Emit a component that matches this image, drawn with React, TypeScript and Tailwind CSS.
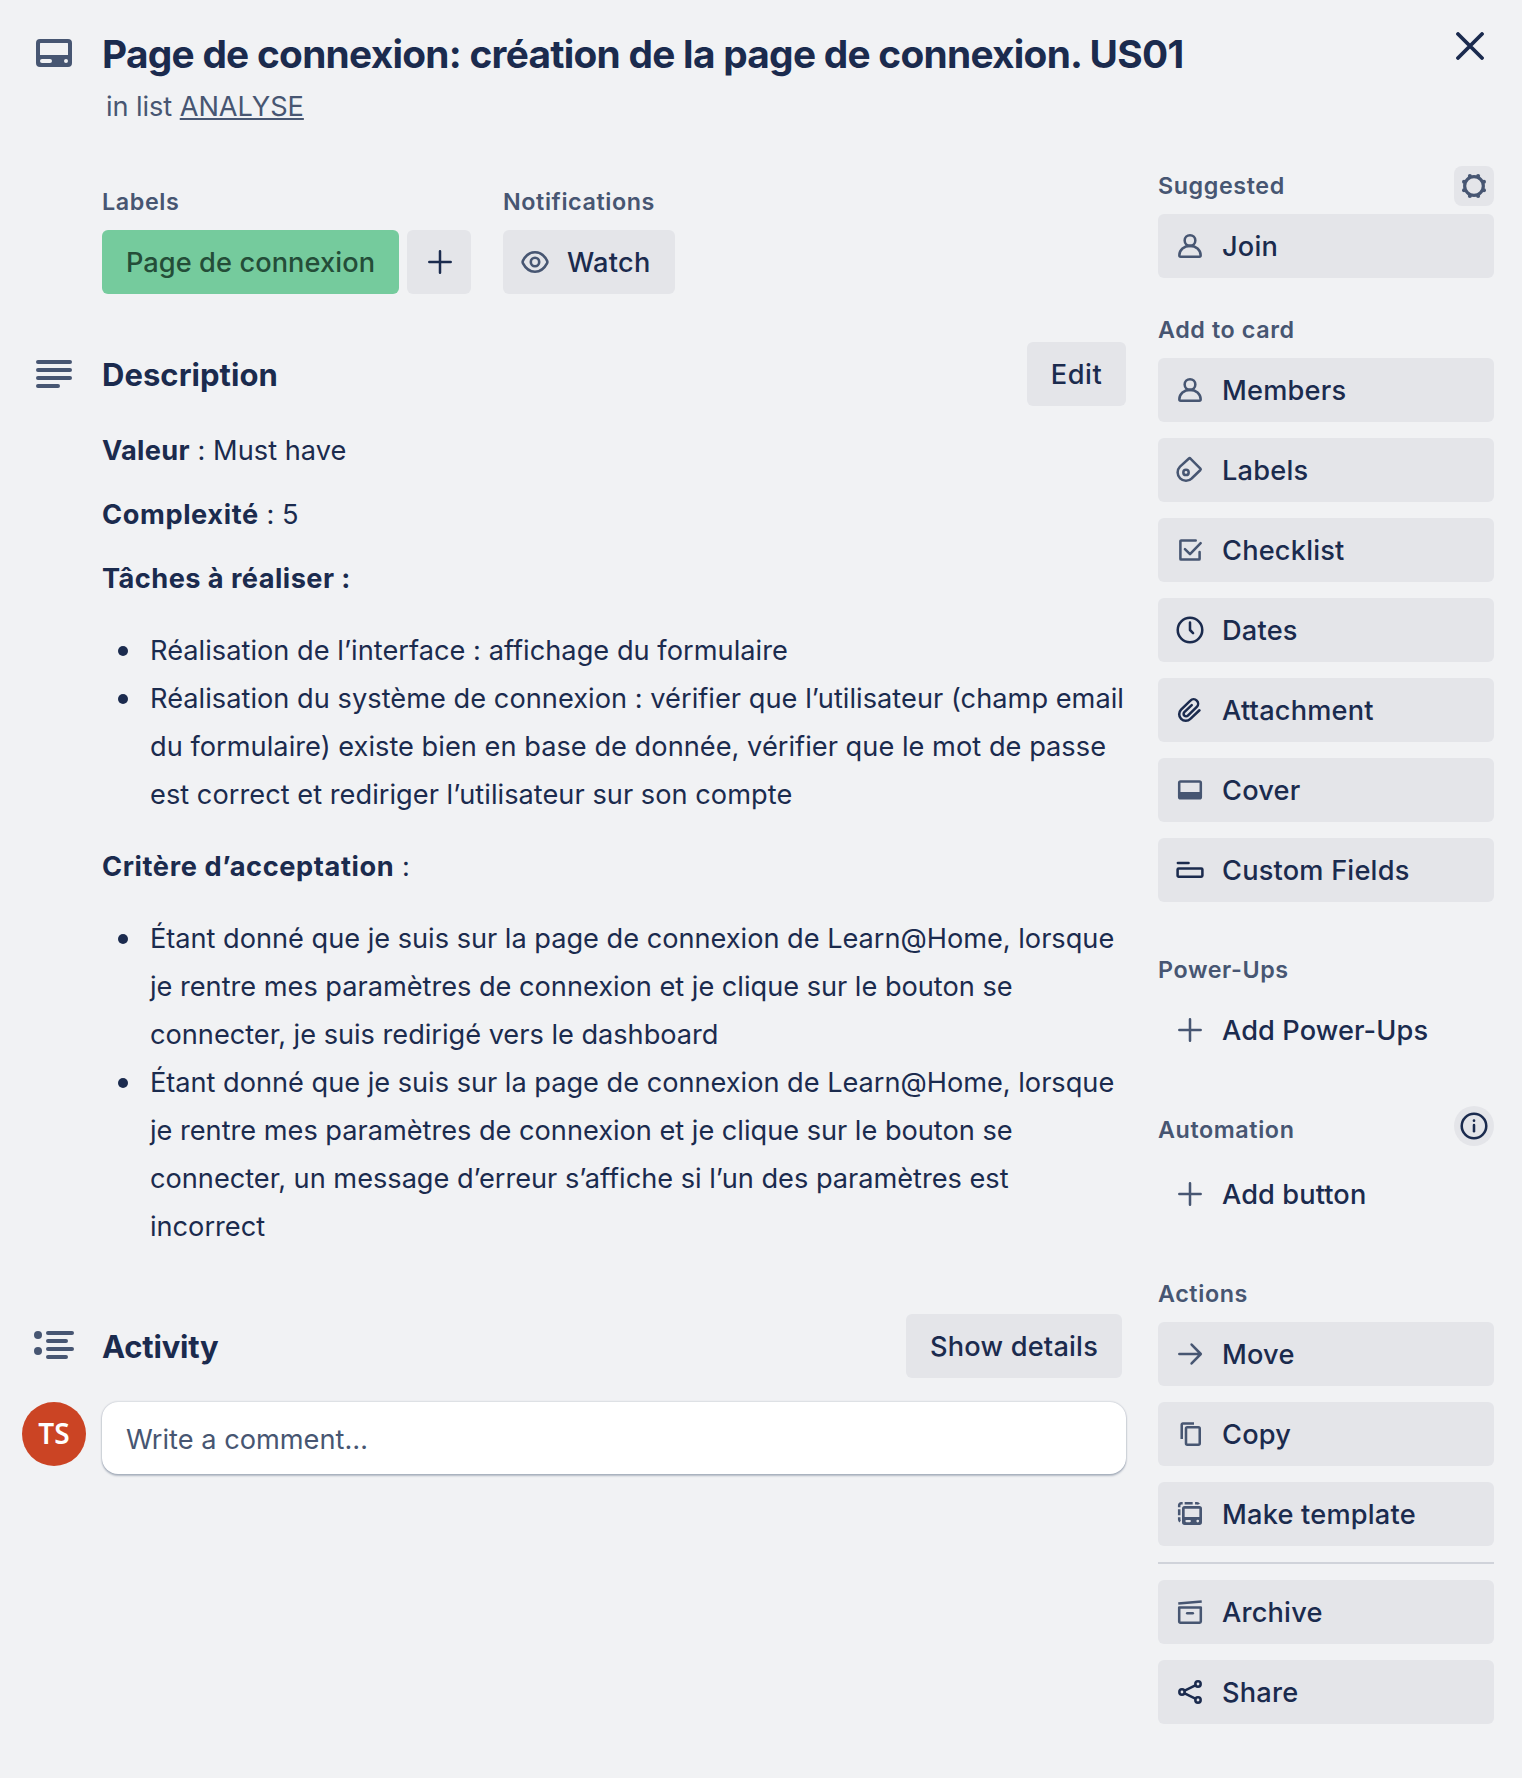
import React from "react";
import type { ReactNode } from "react";

function Icon({ children, dark = false }: { children: ReactNode; dark?: boolean }) {
  return (
    <svg
      viewBox="0 0 24 24"
      fill="none"
      stroke="currentColor"
      strokeWidth="1.9"
      strokeLinecap="round"
      strokeLinejoin="round"
      className={dark ? "size-8 shrink-0 text-[#1b2b4e]" : "size-8 shrink-0 text-[#475672]"}
    >
      {children}
    </svg>
  );
}

const MemberIcon = () => (
  <Icon>
    <circle cx="12" cy="7.9" r="4" />
    <path d="M5 20h14a1 1 0 0 0 1-1c0-4.200-3.600-7.100-8-7.100s-8 2.900-8 7.100a1 1 0 0 0 1 1z" />
  </Icon>
);

const TagIcon = () => (
  <Icon>
    <path d="M4.500 9.500 11.200 3.400a.8.8 0 0 1 1.100 0l7.500 7.500a.8.8 0 0 1 0 1.100l-6.400 6.200A6.200 6.200 0 0 1 4.500 9.500z" />
    <circle cx="9" cy="13.800" r="2" />
  </Icon>
);

const ChecklistIcon = () => (
  <Icon>
    <path d="M16.300 4.800H5.300a.5.5 0 0 0-.5.5v13.400a.5.5 0 0 0 .5.5h13.400a.5.5 0 0 0 .5-.5v-5.200" />
    <path d="M8.200 11.300 12 15.100 20 6.800" />
  </Icon>
);

const ClockIcon = () => (
  <Icon dark>
    <circle cx="12" cy="12" r="9.200" />
    <path d="M12 6.300V12l2.300 2.400" />
  </Icon>
);

const ClipIcon = () => (
  <Icon dark>
    <path d="M19.100 12.200 12.300 18.700a4.950 4.950 0 0 1-7-7L12.300 4.950a3.350 3.350 0 0 1 4.800 4.750l-6.700 6.500a1.850 1.850 0 0 1-2.650-2.600L13.300 8.400" />
  </Icon>
);

const CoverIcon = () => (
  <Icon>
    <rect x="3.900" y="5.700" width="16.200" height="12.500" rx="1" />
    <path d="M3.900 13.500h16.200v4.200a.5.5 0 0 1-.5.5H4.400a.5.5 0 0 1-.5-.5z" fill="currentColor" stroke="none" />
  </Icon>
);

const FieldsIcon = () => (
  <Icon dark>
    <path d="M2.900 6.800h8" />
    <rect x="2.700" y="10.800" width="18.600" height="6.200" rx="0.800" />
  </Icon>
);

const PlusIcon = () => (
  <Icon>
    <path d="M12 4v16M4 12h16" />
  </Icon>
);

const ArrowIcon = () => (
  <Icon>
    <path d="M4 12h16M13.200 4.900 20.100 12l-6.900 7.100" />
  </Icon>
);

const CopyIcon = () => (
  <Icon>
    <path d="M5.800 15.700V4.900a.8.8 0 0 1 .8-.8H15" strokeLinecap="butt" />
    <rect x="9" y="7" width="10.300" height="13" rx="1" />
  </Icon>
);

const TemplateIcon = () => (
  <Icon>
    <path
      fill="currentColor"
      stroke="none"
      fillRule="evenodd"
      d="M8 6h11a2 2 0 0 1 2 2v10.250a2 2 0 0 1-2 2H8a2 2 0 0 1-2-2V8a2 2 0 0 1 2-2zM8 8v6.200h11V8zM9.300 16.500a.8.800 0 0 0 0 1.600h2.600a.8.800 0 0 0 0-1.600zM17.800 16.300a1 1 0 1 0 0 2 1 1 0 0 0 0-2z"
    />
    <path d="M3.900 7V5.400a1.500 1.500 0 0 1 1.500-1.500H6.500M8 3.900h6M15.800 3.900h1.400a1.500 1.500 0 0 1 1.400.8M3.900 8.400v4.500M3.900 14.500v1.700a1.500 1.500 0 0 0 .8 1.300" strokeLinecap="butt" />
  </Icon>
);

const ArchiveIcon = () => (
  <Icon>
    <path d="M3.200 5.700 20.800 4.100" strokeLinecap="butt" />
    <path d="M3.900 8.600h16.200v10.600a.9.9 0 0 1-.9.9H4.800a.9.9 0 0 1-.9-.9z" />
    <path d="M9.900 12.900h4.200" />
  </Icon>
);

const ShareIcon = () => (
  <Icon dark>
    <circle cx="6" cy="12" r="2" />
    <circle cx="18" cy="6" r="2" />
    <circle cx="18" cy="18" r="2" />
    <path d="m8 11 8-4M8 13l8 4" />
  </Icon>
);

const InfoIcon = () => (
  <Icon dark>
    <circle cx="12" cy="12" r="9.200" />
    <path d="M12 11.200v4.700" />
    <circle cx="12" cy="8" r="1" fill="currentColor" stroke="none" />
  </Icon>
);

const GearIcon = () => (
  <Icon>
    <circle cx="12" cy="12" r="7" strokeWidth="2.4" />
    <g fill="currentColor" stroke="none">
      <circle cx="15.100" cy="4.500" r="1.500" />
      <circle cx="19.500" cy="8.900" r="1.500" />
      <circle cx="19.500" cy="15.100" r="1.500" />
      <circle cx="15.100" cy="19.500" r="1.500" />
      <circle cx="8.900" cy="19.500" r="1.500" />
      <circle cx="4.500" cy="15.100" r="1.500" />
      <circle cx="4.500" cy="8.900" r="1.500" />
      <circle cx="8.900" cy="4.500" r="1.500" />
    </g>
  </Icon>
);

const EyeIcon = () => (
  <svg viewBox="0 0 32 32" fill="none" stroke="currentColor" strokeWidth="2.6" className="size-8 shrink-0 text-[#475672]">
    <path d="M4 17.400a3 3 0 0 1 0-2.800C6.600 9.600 11 6.300 16 6.300s9.400 3.300 12 8.300a3 3 0 0 1 0 2.800c-2.600 5-7 8.300-12 8.300S6.600 22.400 4 17.400z" />
    <circle cx="16" cy="16" r="4.200" />
  </svg>
);

function SideButton({ icon, label, plain = false }: { icon: ReactNode; label: string; plain?: boolean }) {
  return (
    <button
      className={
        plain
          ? "flex h-16 w-full items-center gap-4 rounded-md pl-4 text-[27.2px] font-medium tracking-[0.1px]"
          : "flex h-16 w-full items-center gap-4 rounded-md bg-[#e4e5e9] pl-4 text-[27.2px] font-medium tracking-[0.2px]"
      }
    >
      {icon}
      <span className="pt-0.5">{label}</span>
    </button>
  );
}

function SmallHeading({ children }: { children: ReactNode }) {
  return <h3 className="text-[23.3px] leading-6 font-semibold tracking-[0.6px] text-[#475672]">{children}</h3>;
}

function Bullets({ children }: { children: ReactNode }) {
  return <ul className="my-6 ml-4">{children}</ul>;
}

function Bullet({ children }: { children: ReactNode }) {
  return (
    <li className="flex gap-[22px]">
      <span className="mt-[19px] size-2.5 shrink-0 rounded-full bg-[#1b2b4e]" />
      <span>{children}</span>
    </li>
  );
}

const cardItems: [string, ReactNode][] = [
  ["Members", <MemberIcon />],
  ["Labels", <TagIcon />],
  ["Checklist", <ChecklistIcon />],
  ["Dates", <ClockIcon />],
  ["Attachment", <ClipIcon />],
  ["Cover", <CoverIcon />],
  ["Custom Fields", <FieldsIcon />],
];

export default function App() {
  return (
    <div className="h-[1778px] w-[1522px] overflow-hidden bg-[#f1f2f4] font-[Inter,sans-serif] text-[#1b2b4e]">
      <header className="flex h-[166px] items-start pt-[30px] pr-[38px] pl-9">
        <svg viewBox="0 0 36 28" className="mt-[9px] h-7 w-9 shrink-0 text-[#475672]" fill="currentColor">
          <path
            fillRule="evenodd"
            d="M4 0h28a4 4 0 0 1 4 4v20a4 4 0 0 1-4 4H4a4 4 0 0 1-4-4V4a4 4 0 0 1 4-4zM4.500 4a.5.5 0 0 0-.5.5V16h28V4.500a.5.5 0 0 0-.5-.5zM6 20a2 2 0 0 0 0 4h8a2 2 0 0 0 0-4zM30 20a2 2 0 1 0 0 4 2 2 0 0 0 0-4z"
          />
        </svg>
        <div className="ml-[30px] grow">
          <h1 className="text-[38.8px] leading-[48px] font-[650] tracking-[-0.72px] whitespace-nowrap">
            Page de connexion: création de la page de connexion. US01
          </h1>
          <p className="mt-[15px] ml-1 text-[27.2px] leading-7 tracking-[-0.08px] text-[#475672]">
            in list <span className="underline decoration-2 underline-offset-[2px]">ANALYSE</span>
          </p>
        </div>
        <svg viewBox="0 0 28 28" className="mt-0.5 size-7 shrink-0" fill="none" stroke="currentColor" strokeWidth="3.8" strokeLinecap="round">
          <path d="M2 2l24 24M26 2 2 26" />
        </svg>
      </header>

      <div className="flex items-start">
        <main className="w-[1126px] pt-6">
          <div className="flex gap-8 pl-[102px]">
            <section>
              <SmallHeading>Labels</SmallHeading>
              <div className="mt-4 flex gap-2">
                <span className="flex h-16 w-[297px] items-center justify-center rounded-md bg-[#75cb9d] pt-0.5 text-[27.2px] font-medium tracking-[0.08px] text-[#244d38]">
                  Page de connexion
                </span>
                <button className="flex size-16 items-center justify-center rounded-md bg-[#e4e5e9] pl-0.5">
                  <svg viewBox="0 0 24 24" className="size-6" fill="none" stroke="currentColor" strokeWidth="2.5" strokeLinecap="round">
                    <path d="M12 1.300v21.400M1.300 12h21.400" />
                  </svg>
                </button>
              </div>
            </section>
            <section>
              <SmallHeading>Notifications</SmallHeading>
              <button className="mt-4 flex h-16 w-[172px] items-center gap-4 rounded-md bg-[#e4e5e9] pl-4 text-[27.2px] font-medium tracking-[0.25px]">
                <EyeIcon />
                <span className="pt-0.5">Watch</span>
              </button>
            </section>
          </div>

          <section className="mt-12">
            <div className="flex h-16 items-center pl-9">
              <svg viewBox="0 0 36 28" className="h-7 w-9 shrink-0 text-[#475672]" stroke="currentColor" strokeWidth="4" strokeLinecap="round">
                <path d="M2 2h32M2 10h32M2 18h32M2 26h20" />
              </svg>
              <h2 className="ml-[30px] grow pt-0.5 text-[31px] font-[650] tracking-[0.05px]">Description</h2>
              <button className="h-16 w-[99px] rounded-md bg-[#e4e5e9] pt-0.5 text-[27.2px] font-medium tracking-[0.5px]">Edit</button>
            </div>
            <div className="mt-[21px] pl-[102px] text-[27.2px] leading-[48px] tracking-[0.03px]">
              <p>
                <strong className="tracking-[0.3px]">Valeur</strong> : Must have
              </p>
              <p className="mt-4">
                <strong className="tracking-[0.6px]">Complexité</strong> : 5
              </p>
              <p className="mt-4">
                <strong className="tracking-[0.45px]">Tâches à réaliser :</strong>
              </p>
              <Bullets>
                <Bullet>Réalisation de l’interface : affichage du formulaire</Bullet>
                <Bullet>
                  Réalisation du système de connexion : vérifier que l’utilisateur (champ email du formulaire) existe bien
                  en base de donnée, vérifier que le mot de passe est correct et rediriger l’utilisateur sur son compte
                </Bullet>
              </Bullets>
              <p>
                <strong className="tracking-[0.6px]">Critère d’acceptation</strong> :
              </p>
              <div className="tracking-[-0.02px]">
                <Bullets>
                  <Bullet>
                    Étant donné que je suis sur la page de connexion de Learn@Home, lorsque je rentre mes paramètres de
                    connexion et je clique sur le bouton se connecter, je suis redirigé vers le dashboard
                  </Bullet>
                  <Bullet>
                    Étant donné que je suis sur la page de connexion de Learn@Home, lorsque je rentre mes paramètres de
                    connexion et je clique sur le bouton se connecter, un message d’erreur s’affiche si l’un des
                    paramètres est incorrect
                  </Bullet>
                </Bullets>
              </div>
            </div>
          </section>

          <section className="mt-[63px]">
            <div className="flex h-16 items-center pr-1 pl-[34px]">
              <svg viewBox="0 0 40 28" className="-mt-0.5 h-7 w-10 shrink-0 text-[#475672]" stroke="currentColor" strokeWidth="4" strokeLinecap="round">
                <path d="M14 2h24M14 10h18M14 18h24M14 26h18" />
                <g fill="currentColor" stroke="none">
                  <circle cx="4" cy="4" r="4" />
                  <circle cx="4" cy="20" r="4" />
                </g>
              </svg>
              <h2 className="ml-7 grow pt-0.5 text-[31px] font-[650] tracking-[-0.2px]">Activity</h2>
              <button className="h-16 w-[216px] rounded-md bg-[#e4e5e9] pt-0.5 text-[27.2px] font-medium tracking-[0.2px]">Show details</button>
            </div>
            <div className="mt-6 flex items-start gap-4 pl-[22px]">
              <div className="flex size-16 items-center justify-center rounded-full bg-[#cb4424] pb-0.5 font-['Noto_Sans'] text-[28px] font-semibold text-white">
                TS
              </div>
              <div className="flex h-[72px] grow items-center rounded-2xl bg-white pt-1 pl-6 text-[27.2px] text-[#475672] shadow-[0_2px_2px_#091e4240,0_0_2px_#091e424f]">
                Write a comment…
              </div>
            </div>
          </section>
        </main>

        <aside className="ml-8 w-[336px]">
          <div className="flex h-10 items-center justify-between">
            <SmallHeading>Suggested</SmallHeading>
            <button className="flex size-10 items-center justify-center rounded-lg bg-[#e4e5e9]">
              <GearIcon />
            </button>
          </div>
          <div className="mt-2">
            <SideButton icon={<MemberIcon />} label="Join" />
          </div>

          <section className="mt-10">
            <SmallHeading>Add to card</SmallHeading>
            <div className="mt-4 flex flex-col gap-4">
              {cardItems.map(([label, icon]) => (
                <SideButton key={label} icon={icon} label={label} />
              ))}
            </div>
          </section>

          <section className="mt-14">
            <SmallHeading>Power-Ups</SmallHeading>
            <div className="mt-4">
              <SideButton plain icon={<PlusIcon />} label="Add Power-Ups" />
            </div>
          </section>

          <section className="mt-11">
            <div className="flex h-10 items-end justify-between">
              <div className="pb-1">
                <SmallHeading>Automation</SmallHeading>
              </div>
              <button className="flex size-10 items-center justify-center rounded-full bg-[#e4e5e9]">
                <InfoIcon />
              </button>
            </div>
            <div className="mt-4">
              <SideButton plain icon={<PlusIcon />} label="Add button" />
            </div>
          </section>

          <section className="mt-14">
            <SmallHeading>Actions</SmallHeading>
            <div className="mt-4 flex flex-col gap-4">
              <SideButton icon={<ArrowIcon />} label="Move" />
              <SideButton icon={<CopyIcon />} label="Copy" />
              <SideButton icon={<TemplateIcon />} label="Make template" />
              <hr className="h-0.5 border-0 bg-[#d0d3da]" />
              <SideButton icon={<ArchiveIcon />} label="Archive" />
              <SideButton icon={<ShareIcon />} label="Share" />
            </div>
          </section>
        </aside>
      </div>
    </div>
  );
}
